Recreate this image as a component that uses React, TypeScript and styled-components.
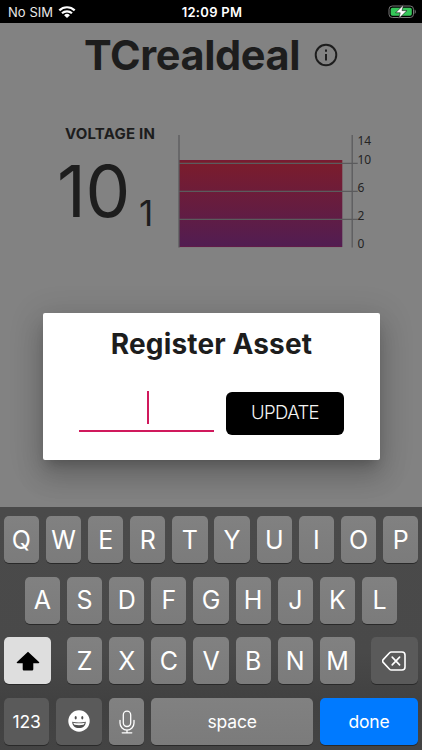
import React from "react";
import styled, { createGlobalStyle } from "styled-components";

const GlobalStyle = createGlobalStyle`
  * { box-sizing: border-box; }
  body { margin: 0; background: #828282; overflow: hidden; }
  button, h1, h2, p { margin: 0; padding: 0; border: 0; font: inherit; }
`;

const Screen = styled.div`
  position: relative;
  display: flex;
  flex-direction: column;
  width: 422px;
  height: 750px;
  overflow: hidden;
  background: #828282;
  color: #1d1d1d;
  font-family: Inter, "Liberation Sans", sans-serif;
`;

const StatusBar = styled.header`
  display: grid;
  grid-template-columns: 1fr auto 1fr;
  align-items: center;
  flex: none;
  height: 23px;
  padding: 1px 6px 0 8px;
  background: #000;
  color: #fff;
  font-size: 13px;
  line-height: 16px;
`;

const Carrier = styled.div`
  display: flex;
  align-items: center;
  gap: 5px;
  color: #e8e8e8;
  letter-spacing: 0.05px;
`;

const Clock = styled.div`
  font-weight: 600;
  letter-spacing: 0.3px;
`;

const Battery = styled.svg`
  justify-self: end;
`;

const Dashboard = styled.main`
  flex: 1;
  min-height: 0;
`;

const TitleRow = styled.div`
  display: flex;
  align-items: center;
  gap: 12px;
  height: 64px;
  padding-left: 84px;
`;

const Title = styled.h1`
  width: 217px;
  font-size: 41.5px;
  font-weight: 700;
  line-height: 64px;
  letter-spacing: -0.4px;
  white-space: nowrap;
`;

const Metric = styled.section`
  display: flex;
  padding: 37px 0 0 58px;
`;

const Reading = styled.div`
  width: 120px;
`;

const MetricName = styled.h2`
  padding-left: 7px;
  font-size: 15px;
  font-weight: 700;
  line-height: 20px;
  letter-spacing: 0.2px;
  white-space: nowrap;
`;

const Value = styled.p`
  display: flex;
  align-items: baseline;
  margin: -1px 0 0 -1px;
  white-space: nowrap;
`;

const Whole = styled.span`
  width: 82px;
  font-size: 71px;
  line-height: 96px;
  letter-spacing: -0.4px;
`;

const Fraction = styled.span`
  position: relative;
  top: 8.5px;
  font-size: 35px;
  line-height: 40px;
`;

const Chart = styled.svg`
  flex: none;
  margin-top: 6px;
  font: 12px "Noto Sans", sans-serif;
`;

const Dialog = styled.section`
  position: absolute;
  left: 43px;
  top: 313px;
  width: 337px;
  height: 147px;
  border-radius: 2px;
  background: #fff;
  box-shadow: 0 8px 11px -5px rgba(0, 0, 0, 0.2), 0 17px 27px 2px rgba(0, 0, 0, 0.14),
    0 6px 32px 5px rgba(0, 0, 0, 0.12);
`;

const DialogTitle = styled.h2`
  padding-top: 14px;
  font-size: 28px;
  font-weight: 700;
  line-height: 34px;
  letter-spacing: 0.15px;
  text-align: center;
  white-space: nowrap;
`;

const Form = styled.div`
  display: flex;
  gap: 12px;
  margin: 30px 0 0 36px;
`;

const Field = styled.div`
  display: flex;
  justify-content: center;
  width: 135px;
  height: 41px;
  border-bottom: 2px solid #d0195c;
`;

const Caret = styled.span`
  width: 2px;
  height: 33px;
  margin: 0 0 0 2px;
  background: #d0195c;
`;

const UpdateButton = styled.button`
  width: 118px;
  height: 43px;
  margin-top: 0.5px;
  padding-bottom: 2px;
  border-radius: 6px;
  background: #000;
  color: #f4f4f4;
  font-size: 18.5px;
  font-weight: 300;
  letter-spacing: -0.6px;
`;

const Keyboard = styled.footer`
  display: flex;
  flex-direction: column;
  gap: 13.6px;
  flex: none;
  height: 243px;
  padding: 9px 3.7px 0;
  background: linear-gradient(#4a4a4a 0%, #494949 60%, #414141 80%, #444 100%);
`;

const KeyRow = styled.div`
  display: flex;
  justify-content: center;
  gap: 6.9px;
`;

type KeyTone = "letter" | "dark" | "shift" | "done";
const toneColor: Record<KeyTone, string> = {
  letter: "linear-gradient(#818181, #7b7b7b)",
  dark: "#5a5a5a",
  shift: "#dedede",
  done: "#007aff",
};

const Key = styled.button<{ $width?: number; $tone?: KeyTone; $size?: number; $before?: number; $after?: number }>`
  display: flex;
  align-items: center;
  justify-content: center;
  flex: none;
  width: ${(p) => p.$width ?? 35.25}px;
  height: 47px;
  margin: 0 ${(p) => p.$after ?? 0}px 0 ${(p) => p.$before ?? 0}px;
  padding-top: ${(p) => (p.$tone || p.$size ? 0 : 1.5)}px;
  border-radius: 5px;
  background: ${(p) => toneColor[p.$tone ?? "letter"]};
  box-shadow: 0 1px 0 #292929;
  color: #fff;
  font-size: ${(p) => p.$size ?? 25}px;
  font-weight: 400;
  letter-spacing: ${(p) => (p.$size ? -0.2 : 0)}px;
  line-height: 1;
`;

const WifiIcon = () => (
  <svg width="18" height="14" viewBox="0 0 18 14" fill="none" stroke="#fff" strokeWidth="2.2">
    <path d="M1.3 5.4a11 11 0 0 1 15.4 0M4 8.3a7.2 7.2 0 0 1 10 0" />
    <path d="M9 13 6.1 10.2a4.1 4.1 0 0 1 5.8 0Z" fill="#fff" stroke="none" />
  </svg>
);

const BatteryIcon = () => (
  <Battery width="28" height="16" viewBox="0 0 28 16">
    <rect x="1" y="2" width="24.5" height="11.5" rx="3.3" fill="none" stroke="#777" />
    <rect x="2.7" y="3.7" width="21.1" height="8.1" rx="1.8" fill="#35c759" />
    <path d="M26.6 5.5v4.4c1.6-.7 1.6-3.7 0-4.4Z" fill="#777" />
    <path d="M15.8.6 7.6 8.8h4.6l-1.4 5.8 8.2-8h-5Z" fill="#fff" stroke="#111" strokeWidth=".6" />
  </Battery>
);

const InfoIcon = () => (
  <svg width="26" height="26" viewBox="0 0 24 24" fill="none" stroke="#1d1d1d" strokeWidth="1.8">
    <circle cx="12" cy="12" r="9.5" />
    <path d="M12 11v6M12 7v2" />
  </svg>
);

const ShiftIcon = () => (
  <svg width="24" height="20" viewBox="0 0 24 20">
    <path d="M12 .7 23 11c.6.6.3 1.2-.5 1.2h-5.2v5.7c0 1-.6 1.6-1.6 1.6H8.3c-1 0-1.6-.6-1.6-1.6v-5.7H1.5c-.8 0-1.1-.6-.5-1.2Z" fill="#000" />
  </svg>
);

const SmileIcon = () => (
  <svg width="22" height="22" viewBox="0 0 22 22">
    <circle cx="11" cy="11" r="10.7" fill="#fff" />
    <ellipse cx="7.7" cy="7.7" rx="1.05" ry="1.7" fill="#505050" />
    <ellipse cx="14.3" cy="7.7" rx="1.05" ry="1.7" fill="#505050" />
    <path d="M4.2 11.7c4.2.9 9.4.9 13.6 0-.1 4-2.8 6.4-6.8 6.4s-6.7-2.4-6.8-6.4Z" fill="#505050" />
    <path d="M5.2 12.8c3.7.7 7.9.7 11.6 0-.3 1-.8 1.6-1.3 2-2.9.5-6.1.5-9 0-.6-.5-1-1.1-1.3-2Z" fill="#fff" />
  </svg>
);

const MicIcon = () => (
  <svg width="18" height="24" viewBox="0 0 18 24" fill="none" stroke="#fff" strokeWidth="1.3" strokeLinecap="round">
    <rect x="5.3" y="1.2" width="7.4" height="15.3" rx="3.7" />
    <path d="M2 10.3v2.8a7 7 0 0 0 14 0v-2.8M9 20v2.8M4.2 22.8h9.6" />
  </svg>
);

const DeleteIcon = () => (
  <svg width="24" height="20" viewBox="0 0 24 20" fill="none" stroke="#fff" strokeWidth="1.6" strokeLinecap="round" strokeLinejoin="round">
    <path d="M9.3 1H20q3 0 3 3v12q0 3-3 3H9.3q-1 0-1.7-.8L1.2 11.4q-1.2-1.4 0-2.8l6.4-6.8Q8.3 1 9.3 1Z" />
    <path d="m10.2 6.1 7.4 7.8m0-7.8-7.4 7.8" />
  </svg>
);

const axisLabels = [
  { label: "14", y: 14.5 },
  { label: "10", y: 33.5 },
  { label: "6", y: 61.5 },
  { label: "2", y: 89.5 },
  { label: "0", y: 117.8 },
];

const VoltageChart = () => (
  <Chart width="200" height="124" viewBox="0 0 200 124">
    <defs>
      <linearGradient id="voltage" x1="0" y1="0" x2="0" y2="1">
        <stop offset="0" stopColor="#7d1c2b" />
        <stop offset="1" stopColor="#511d52" />
      </linearGradient>
    </defs>
    <rect x="1" y="30" width="163.3" height="87" fill="url(#voltage)" />
    <path d="M1 30.7h163M1 116.6h163" stroke="#701c40" strokeWidth="1" opacity=".55" />
    <path d="M1 33.3h178.7M1 61.3h178.7M1 89.3h178.7" stroke="#5b5b5d" strokeWidth="1.2" />
    <path d="M1 5v112.4M174.2 5v112.4" stroke="#5b5b5d" strokeWidth="1.3" />
    {axisLabels.map(({ label, y }) => (
      <text key={label} x="179.5" y={y} fill="#242424">{label}</text>
    ))}
  </Chart>
);

export default function App() {
  return (
    <Screen>
      <GlobalStyle />
      <StatusBar>
        <Carrier>No SIM <WifiIcon /></Carrier>
        <Clock>12:09 PM</Clock>
        <BatteryIcon />
      </StatusBar>
      <Dashboard>
        <TitleRow><Title>TCrealdeal</Title><InfoIcon /></TitleRow>
        <Metric>
          <Reading>
            <MetricName>VOLTAGE IN</MetricName>
            <Value><Whole>10</Whole><Fraction>1</Fraction></Value>
          </Reading>
          <VoltageChart />
        </Metric>
      </Dashboard>
      <Dialog role="dialog" aria-label="Register Asset">
        <DialogTitle>Register Asset</DialogTitle>
        <Form>
          <Field><Caret /></Field>
          <UpdateButton>UPDATE</UpdateButton>
        </Form>
      </Dialog>
      <Keyboard>
        <KeyRow>{[..."QWERTYUIOP"].map((c) => <Key key={c}>{c}</Key>)}</KeyRow>
        <KeyRow>{[..."ASDFGHJKL"].map((c) => <Key key={c}>{c}</Key>)}</KeyRow>
        <KeyRow>
          <Key $width={47} $tone="shift" $after={9} aria-label="shift"><ShiftIcon /></Key>
          {[..."ZXCVBNM"].map((c) => <Key key={c}>{c}</Key>)}
          <Key $width={47} $tone="dark" $before={9} aria-label="delete"><DeleteIcon /></Key>
        </KeyRow>
        <KeyRow>
          <Key $width={45.3} $tone="dark" $size={17.5}>123</Key>
          <Key $width={46} $tone="dark" aria-label="emoji"><SmileIcon /></Key>
          <Key aria-label="dictation"><MicIcon /></Key>
          <Key $width={162} $size={17.5}>space</Key>
          <Key $width={98} $tone="done" $size={17.5}>done</Key>
        </KeyRow>
      </Keyboard>
    </Screen>
  );
}
